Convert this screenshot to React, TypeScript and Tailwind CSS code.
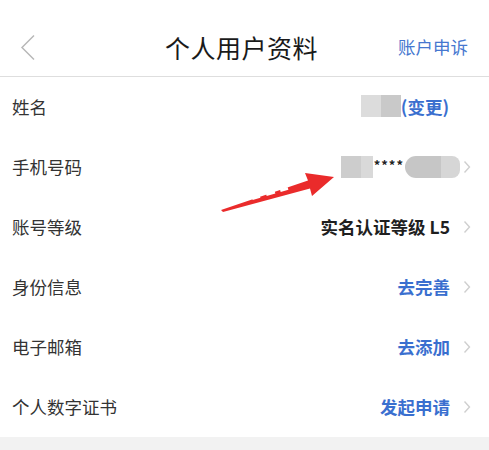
import React from 'react';

const font = { fontFamily: '"Noto Sans CJK SC", "Noto Sans", sans-serif' };

function Chevron({ className }: { className?: string }) {
  return (
    <svg width="8" height="14" viewBox="0 0 8 14" className={className}>
      <path d="M1.5 1.5 L6.5 7 L1.5 12.5" fill="none" stroke="#cfcfcf" strokeWidth="1.4" />
    </svg>
  );
}

function Row({
  label,
  children,
  gap,
  chevron = true,
}: {
  label: string;
  children: React.ReactNode;
  gap?: string;
  chevron?: boolean;
}) {
  return (
    <div className={`flex h-[60px] items-center pl-[12px] ${chevron ? 'pr-[18px]' : 'pr-[40px]'}`}>
      <span className="text-[17.5px] text-[#333333]">{label}</span>
      <div className="flex-1" />
      {children}
      {chevron && <Chevron className={gap ?? 'ml-[13px]'} />}
    </div>
  );
}

export default function App() {
  return (
    <div className="relative h-[450px] w-[489px] overflow-hidden bg-white" style={font}>
      <header className="flex h-[77px] items-center border-b border-[#dedede] px-[20px] pt-[19px]">
        <svg width="16" height="28" viewBox="0 0 16 28">
          <path d="M14 1.5 L2 13.5 L14 25.5" fill="none" stroke="#b8b8b8" strokeWidth="1.5" />
        </svg>
        <h1 className="ml-[129px] text-[25px] font-normal tracking-[0.5px] text-[#1a1a1a]">个人用户资料</h1>
        <div className="flex-1" />
        <span className="mr-[1px] text-[17.5px] text-[#4677cf]">账户申诉</span>
      </header>

      <Row label="姓名" chevron={false}>
        <div className="mt-[-3px] flex h-[22px]">
          <div className="w-[20px] bg-[#dcdcdc]" />
          <div className="w-[20px] bg-[#c9c9c9]" />
        </div>
        <span className="text-[17.5px] font-bold text-[#3a6fcf]">(变更)</span>
      </Row>

      <Row label="手机号码" gap="ml-[3px]">
        <div className="flex h-[22px] items-center">
          <div className="h-[22px] w-[20px] bg-[#cdcdcd]" />
          <div className="h-[22px] w-[12px] bg-[#d9d9d9]" />
          <span className="mx-[1px] mt-[-4px] text-[13px] font-bold tracking-[1px] text-[#222]">****</span>
          <div className="h-[22px] w-[36px] rounded-l-[11px] bg-[#c6c6c6]" />
          <div className="h-[22px] w-[19px] rounded-r-[8px] bg-[#d6d6d6]" />
        </div>
      </Row>

      <Row label="账号等级">
        <span className="text-[17.5px] font-bold text-[#1f1f1f]">实名认证等级 L5</span>
      </Row>

      <Row label="身份信息">
        <span className="text-[17.5px] font-bold text-[#3a6fcf]">去完善</span>
      </Row>

      <Row label="电子邮箱">
        <span className="text-[17.5px] font-bold text-[#3a6fcf]">去添加</span>
      </Row>

      <Row label="个人数字证书">
        <span className="text-[17.5px] font-bold text-[#3a6fcf]">发起申请</span>
      </Row>

      <div className="h-[14px] bg-[#f2f2f2]" />

      <svg className="absolute left-0 top-0" width="489" height="450" viewBox="0 0 489 450">
        <polygon
          points="221,210 308,180.5 305,173 334,177 312,196 310,188.5 223,212"
          fill="#ea2b2b"
        />
        <rect x="252" y="196" width="8" height="3" fill="#fff" transform="rotate(-16 256 197)" />
        <rect x="266" y="192" width="9" height="3" fill="#fff" transform="rotate(-16 270 193)" />
        <rect x="280" y="188" width="8" height="3" fill="#fff" transform="rotate(-16 284 189)" />
      </svg>
    </div>
  );
}
